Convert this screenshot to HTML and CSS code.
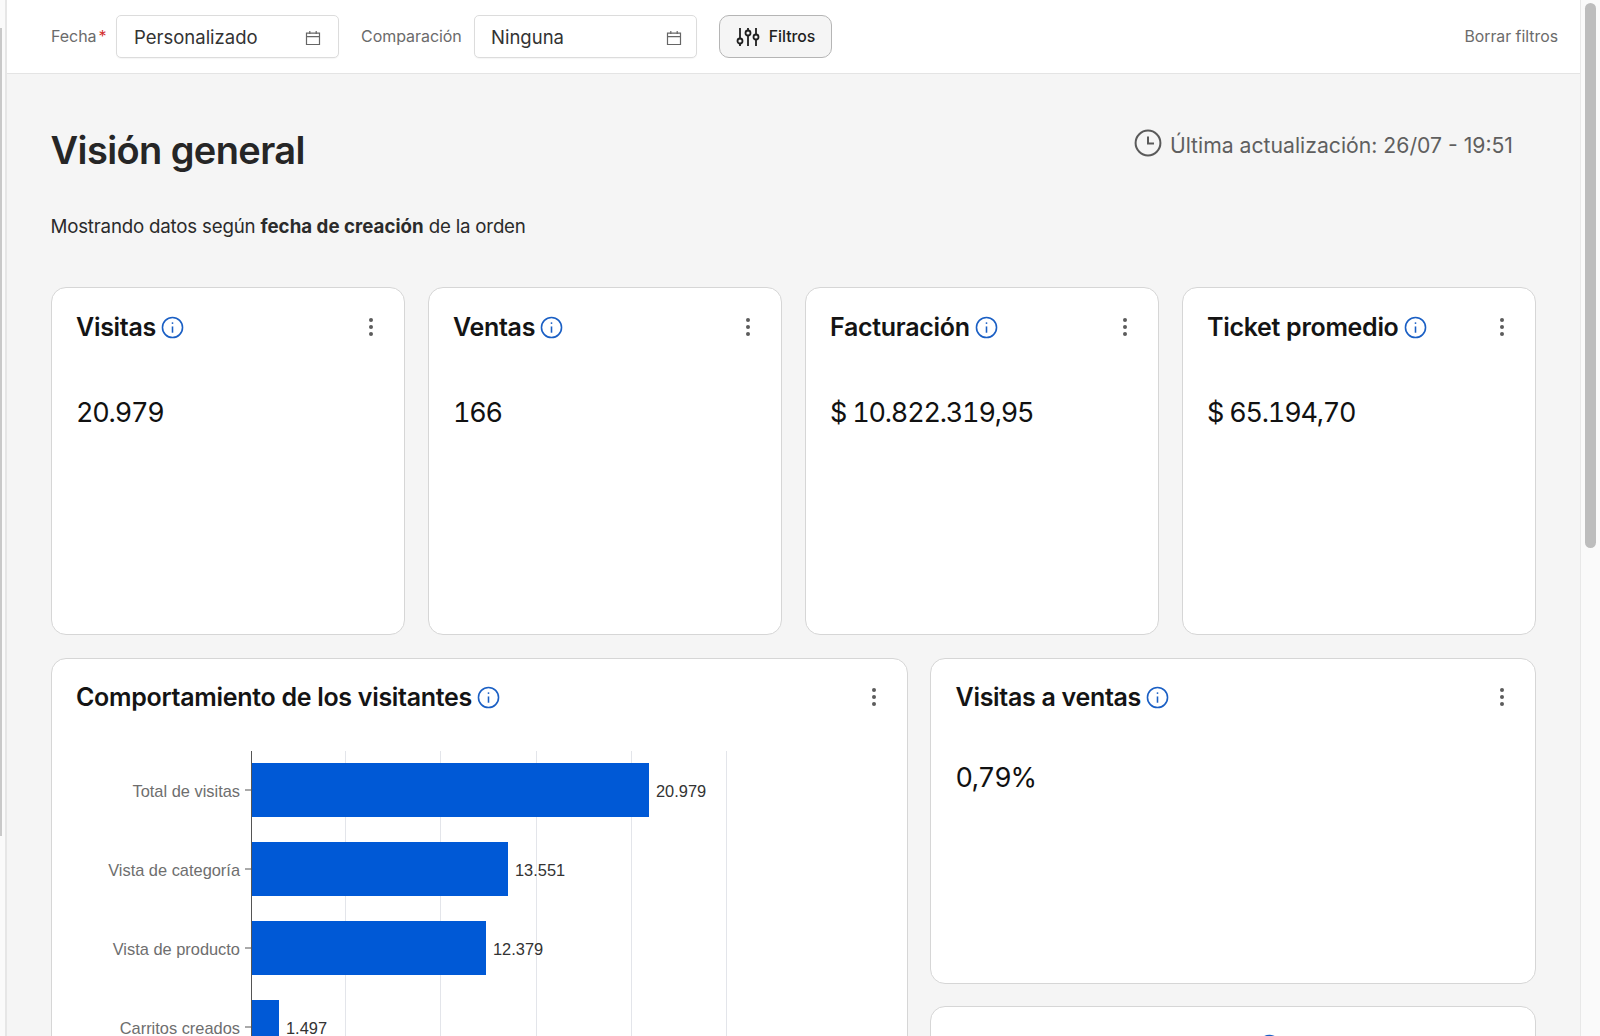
FILE: index.html
```html
<!DOCTYPE html>
<html lang="es">
<head>
<meta charset="utf-8">
<title>Visión general</title>
<link rel="stylesheet" href="styles.css">
</head>
<body>
<div class="app">
  <div class="rail"><div class="rail-strip"></div></div>
  <main class="main">
    <header class="filters">
      <span class="flabel flabel-date">Fecha<em class="req">*</em></span>
      <div class="select select-date">
        <span>Personalizado</span>
        <svg class="cal" viewBox="0 0 16 16"><path d="M1.500 3.200h13v11.300h-13zM1.500 6.600h13M4.800 1v3M11.200 1v3"/></svg>
      </div>
      <span class="flabel flabel-comp">Comparación</span>
      <div class="select select-comp">
        <span>Ninguna</span>
        <svg class="cal" viewBox="0 0 16 16"><path d="M1.500 3.200h13v11.300h-13zM1.500 6.600h13M4.800 1v3M11.200 1v3"/></svg>
      </div>
      <button class="fbtn" type="button">
        <svg class="sliders" viewBox="0 0 24 20"><path d="M4 1v10.500M4 16.500V19M12 1v2.500M12 8.500V19M20 1v6.500M20 12.500V19"/><circle cx="4" cy="14" r="2.500"/><circle cx="12" cy="6" r="2.500"/><circle cx="20" cy="10" r="2.500"/></svg>
        Filtros
      </button>
      <a class="clear">Borrar filtros</a>
    </header>
    <section class="content">
      <div class="titlebar">
        <h1>Visión general</h1>
        <div class="updated">
          <svg class="clock" viewBox="0 0 28 28"><circle cx="14" cy="14" r="12.400"/><path d="M14 7.500V14.600h6"/></svg>
          <span>Última actualización: 26/07 - 19:51</span>
        </div>
      </div>
      <p class="note">Mostrando datos según <b>fecha de creación</b> de la orden</p>
      <div class="kpis">
        <article class="card kpi">
          <div class="chead"><h2>Visitas</h2><svg class="info" viewBox="0 0 22 22"><circle cx="11" cy="11" r="9.600"/><path d="M11 10v6"/><circle class="dot" cx="11" cy="6.800" r=".9"/></svg><svg class="kebab" viewBox="0 0 6 20"><circle cx="3" cy="3" r="2"/><circle cx="3" cy="10" r="2"/><circle cx="3" cy="17" r="2"/></svg></div>
          <div class="value">20.979</div>
        </article>
        <article class="card kpi">
          <div class="chead"><h2>Ventas</h2><svg class="info" viewBox="0 0 22 22"><circle cx="11" cy="11" r="9.600"/><path d="M11 10v6"/><circle class="dot" cx="11" cy="6.800" r=".9"/></svg><svg class="kebab" viewBox="0 0 6 20"><circle cx="3" cy="3" r="2"/><circle cx="3" cy="10" r="2"/><circle cx="3" cy="17" r="2"/></svg></div>
          <div class="value">166</div>
        </article>
        <article class="card kpi">
          <div class="chead"><h2>Facturación</h2><svg class="info" viewBox="0 0 22 22"><circle cx="11" cy="11" r="9.600"/><path d="M11 10v6"/><circle class="dot" cx="11" cy="6.800" r=".9"/></svg><svg class="kebab" viewBox="0 0 6 20"><circle cx="3" cy="3" r="2"/><circle cx="3" cy="10" r="2"/><circle cx="3" cy="17" r="2"/></svg></div>
          <div class="value">$ 10.822.319,95</div>
        </article>
        <article class="card kpi">
          <div class="chead"><h2>Ticket promedio</h2><svg class="info" viewBox="0 0 22 22"><circle cx="11" cy="11" r="9.600"/><path d="M11 10v6"/><circle class="dot" cx="11" cy="6.800" r=".9"/></svg><svg class="kebab" viewBox="0 0 6 20"><circle cx="3" cy="3" r="2"/><circle cx="3" cy="10" r="2"/><circle cx="3" cy="17" r="2"/></svg></div>
          <div class="value">$ 65.194,70</div>
        </article>
      </div>
      <div class="lower">
        <article class="card funnel">
          <div class="chead"><h2>Comportamiento de los visitantes</h2><svg class="info" viewBox="0 0 22 22"><circle cx="11" cy="11" r="9.600"/><path d="M11 10v6"/><circle class="dot" cx="11" cy="6.800" r=".9"/></svg><svg class="kebab" viewBox="0 0 6 20"><circle cx="3" cy="3" r="2"/><circle cx="3" cy="10" r="2"/><circle cx="3" cy="17" r="2"/></svg></div>
          <svg class="chart" viewBox="0 0 700 400">
            <g class="grid"><path d="M269.500 6V400M364.500 6V400M460.500 6V400M555.500 6V400M650.500 6V400"/></g>
            <g class="bars">
              <rect x="175" y="18" width="398" height="54"/>
              <rect x="175" y="97" width="257" height="54"/>
              <rect x="175" y="176" width="235" height="54"/>
              <rect x="175" y="255" width="28" height="54"/>
            </g>
            <path class="axis" d="M175.500 6V400"/>
            <path class="axis" d="M169 45h6M169 124h6M169 203h6M169 282h6"/>
            <g class="cat">
              <text x="164" y="51.500">Total de visitas</text>
              <text x="164" y="130.500">Vista de categoría</text>
              <text x="164" y="209.500">Vista de producto</text>
              <text x="164" y="288.500">Carritos creados</text>
            </g>
            <g class="num">
              <text x="580" y="51.500">20.979</text>
              <text x="439" y="130.500">13.551</text>
              <text x="417" y="209.500">12.379</text>
              <text x="210" y="288.500">1.497</text>
            </g>
          </svg>
        </article>
        <div class="side">
          <article class="card rate">
            <div class="chead"><h2>Visitas a ventas</h2><svg class="info" viewBox="0 0 22 22"><circle cx="11" cy="11" r="9.600"/><path d="M11 10v6"/><circle class="dot" cx="11" cy="6.800" r=".9"/></svg><svg class="kebab" viewBox="0 0 6 20"><circle cx="3" cy="3" r="2"/><circle cx="3" cy="10" r="2"/><circle cx="3" cy="17" r="2"/></svg></div>
            <div class="value value-rate">0,79%</div>
          </article>
          <article class="card rate">
            <div class="chead chead-next"><svg class="info" viewBox="0 0 22 22"><circle cx="11" cy="11" r="9.600"/><path d="M11 10v6"/><circle class="dot" cx="11" cy="6.800" r=".9"/></svg></div>
          </article>
        </div>
      </div>
    </section>
  </main>
  <div class="track"><div class="thumb"></div></div>
</div>
</body>
</html>
```
FILE: styles.css
```css
* { box-sizing: border-box; }
html, body { margin: 0; height: 100%; overflow: hidden; }
body { font-family: Inter, "Liberation Sans", sans-serif; color: #212121; background: #f5f5f5; }
.app { display: flex; height: 1036px; overflow: hidden; }

.rail { width: 7px; flex: none; background: #fafafa; border-right: 2px solid #e6e6e6; padding-top: 28px; }
.rail-strip { width: 2px; height: 808px; background: #c9c9c9; }

.main { flex: 1; min-width: 0; background: #f5f5f5; }
.track { width: 20px; flex: none; background: #fafafa; border-left: 1px solid #e8e8e8; padding: 3px 4px 0 4px; }
.thumb { height: 545px; border-radius: 6px; background: #bdbdbd; }

.filters { height: 74px; background: #fff; border-bottom: 1px solid #e4e4e4; display: flex; align-items: center; padding: 0 22px 0 44px; }
.flabel { font-size: 16px; line-height: 20px; margin-bottom: 2px; color: #6b6b6b; letter-spacing: -.05px; white-space: nowrap; }
.flabel-date { width: 65px; }
.flabel-comp { margin-left: 22px; width: 113px; }
.req { color: #d32f2f; font-style: normal; margin-left: 2px; }
.select { width: 223px; height: 43px; border: 1px solid #dcdcdc; border-radius: 5px; background: #fff; display: flex; align-items: center; justify-content: space-between; padding: 0 17px; font-size: 18.500px; color: #333; box-shadow: 0 1px 1px rgba(0,0,0,.04); }
.select-comp { padding: 0 14px 0 16px; }
.cal { width: 16px; height: 16px; fill: none; stroke: #666; stroke-width: 1.200; margin-top: 2px; }
.fbtn { margin-left: 22px; width: 113px; height: 43px; border: 1px solid #b5b5b5; border-radius: 10px; background: #f5f5f5; display: flex; align-items: center; justify-content: center; gap: 9px; font: 500 15.800px Inter, "Liberation Sans", sans-serif; color: #1f1f1f; padding: 0; }
.sliders { width: 24px; height: 20px; fill: none; stroke: #1f1f1f; stroke-width: 1.800; }
.clear { margin-left: auto; font-size: 15.800px; color: #6b6b6b; }

.content { padding: 0 44px 0 43.500px; }
.titlebar { display: flex; justify-content: space-between; padding-top: 52px; height: 140px; padding-right: 23px; }
h1 { margin: 0; font-size: 38px; line-height: 48px; font-weight: 600; color: #262626; letter-spacing: -.6px; }
.updated { display: flex; align-items: center; gap: 8px; height: 40px; font-size: 21.200px; color: #5f5f5f; margin-top: -1px; }
.clock { width: 28px; height: 28px; fill: none; stroke: #5a5a5a; stroke-width: 2; margin-top: -5px; }
.note { margin: 0; font-size: 18.700px; line-height: 26px; color: #2b2b2b; letter-spacing: -.2px; }
.note b { font-weight: 700; letter-spacing: .02px; }

.card { background: #fff; border: 1px solid #d6d6d6; border-radius: 15px; padding: 26px 25px 0 24.500px; }
.kpis { display: grid; grid-template-columns: repeat(4, 1fr); gap: 22.500px; margin-top: 47px; }
.kpi { height: 348px; }
.chead { display: flex; align-items: center; height: 26px; gap: 5px; }
h2 { margin: 0; font-size: 25px; line-height: 26px; font-weight: 600; color: #141414; letter-spacing: -.3px; white-space: nowrap; }
.info { width: 23px; height: 23px; flex: none; fill: none; stroke: #1a5fc4; stroke-width: 1.500; }
.info .dot { fill: #1a5fc4; stroke: none; }
.kebab { width: 6px; height: 20px; flex: none; margin-left: auto; margin-right: 5px; fill: #5c5c5c; }
.value { margin-top: 54px; font-size: 27px; line-height: 38px; color: #111; letter-spacing: -1.200px; font-variant-numeric: tabular-nums; }
.value-rate { margin-top: 49px; }

.lower { display: grid; grid-template-columns: 857.500px 1fr; gap: 22px; margin-top: 23px; align-items: start; }
.funnel { height: 640px; padding-top: 25px; }
.chart { display: block; width: 700px; height: 400px; margin-top: 35px; }
.grid path { stroke: #e3e5ea; stroke-width: 1; fill: none; }
.bars rect { fill: #0059d6; }
.axis { stroke: #555; stroke-width: 1; fill: none; }
.cat text { font: 16.400px "Liberation Sans", Arial, sans-serif; fill: #6e6e6e; text-anchor: end; }
.num text { font: 16.400px "Liberation Sans", Arial, sans-serif; fill: #333; }
.side { display: flex; flex-direction: column; gap: 22px; }
.rate { height: 326px; padding-top: 25px; }
.chead-next { padding-left: 302px; }
```
